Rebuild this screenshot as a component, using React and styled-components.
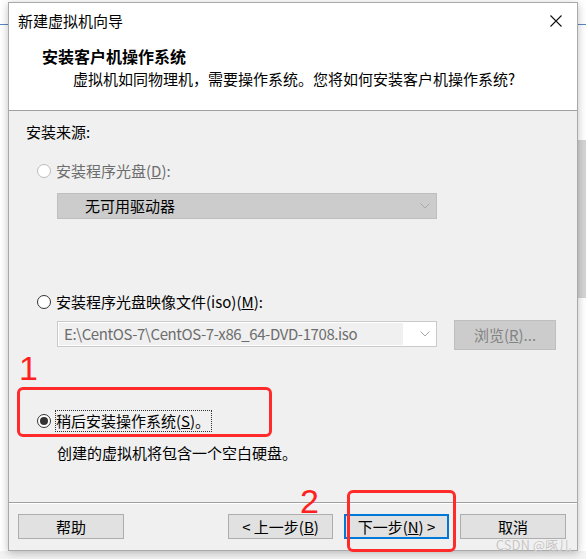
import React from 'react';
import styled, { createGlobalStyle } from 'styled-components';

const uiFont = `"Noto Sans CJK SC", "Noto Sans", sans-serif`;

const GlobalStyle = createGlobalStyle`
  html, body {
    margin: 0;
    padding: 0;
    background: #fff;
  }
`;

const Desktop = styled.div`
  width: 586px;
  height: 559px;
  box-sizing: border-box;
  padding: 2px 8px 0 8px;
  overflow: hidden;
  background:
    linear-gradient(#5a86c2, #5a86c2) 0 24px / 8px 1px no-repeat,
    linear-gradient(#5a86c2, #5a86c2) 578px 24px / 8px 1px no-repeat,
    linear-gradient(#d4d4d4, #d4d4d4) 578px 140px / 8px 158px no-repeat,
    linear-gradient(#f3f3f3, #f3f3f3) 0 551px / 586px 8px no-repeat,
    #fff;
`;

const Dialog = styled.div`
  position: relative;
  width: 570px;
  height: 549px;
  box-sizing: border-box;
  border: 1px solid #a9a9a9;
  box-shadow: 0 2px 8px rgba(0, 0, 0, 0.25);
  display: flex;
  flex-direction: column;
  font-family: ${uiFont};
  font-size: 15px;
  line-height: 20px;
  color: #000;
`;

const TitleBar = styled.div`
  height: 35px;
  flex: none;
  background: #fff;
  display: flex;
  align-items: center;
  justify-content: space-between;
  padding: 0 15px 0 9px;
`;

const Header = styled.div`
  height: 73px;
  flex: none;
  box-sizing: border-box;
  background: #fff;
  border-bottom: 1px solid #a0a0a0;
  padding: 8px 0 0 33px;
`;

const HeaderTitle = styled.div`
  font-weight: 700;
  font-size: 16px;
`;

const HeaderText = styled.div`
  margin: 3px 0 0 31px;
`;

const Body = styled.div`
  flex: 1;
  background: #f0f0f0;
  padding: 11px 0 0 17px;
  display: flex;
  flex-direction: column;
  align-items: flex-start;
`;

const RadioRow = styled.label`
  display: flex;
  align-items: center;
  gap: 5px;
  margin: ${(p) => p.$top}px 0 0 11px;
  color: ${(p) => (p.$disabled ? '#6d6d6d' : '#000')};
`;

const RadioDot = styled.span`
  width: 14px;
  height: 14px;
  box-sizing: border-box;
  border-radius: 50%;
  border: 1px solid ${(p) => (p.$disabled ? '#bcbcbc' : '#333')};
  background: #fff;
  display: flex;
  align-items: center;
  justify-content: center;
  &::after {
    content: '';
    display: ${(p) => (p.$checked ? 'block' : 'none')};
    width: 8px;
    height: 8px;
    border-radius: 50%;
    background: #333;
  }
`;

const FocusText = styled.span`
  outline: 1px dotted #333;
  outline-offset: 0;
  padding-right: 1px;
`;

const Combo = styled.div`
  margin: ${(p) => p.$top}px 0 0 31px;
  width: 380px;
  height: 26px;
  box-sizing: border-box;
  border: 1px solid ${(p) => (p.$filled ? '#bfbfbf' : '#cacaca')};
  background: ${(p) => (p.$filled ? '#cccccc' : '#fff')};
  display: flex;
  align-items: center;
  padding: 1px 6px 1px 1px;
`;

const ComboText = styled.div`
  flex: 1;
  align-self: stretch;
  display: flex;
  align-items: center;
  padding-left: ${(p) => p.$indent}px;
  background: ${(p) => (p.$field ? '#f0f0f0' : 'transparent')};
  margin-right: ${(p) => (p.$field ? 17 : 0)}px;
  color: ${(p) => (p.$field ? '#6d6d6d' : '#000')};
  letter-spacing: ${(p) => (p.$field ? '-0.4px' : '0')};
  white-space: nowrap;
`;

const InputRow = styled.div`
  display: flex;
  align-items: flex-start;
  margin-top: 9px;
`;

const BrowseButton = styled.div`
  margin: -1px 0 0 17px;
  width: 102px;
  height: 30px;
  box-sizing: border-box;
  border: 1px solid #bfbfbf;
  background: #cccccc;
  color: #838383;
  display: flex;
  align-items: center;
  justify-content: center;
`;

const Note = styled.div`
  margin: 12px 0 0 31px;
`;

const Footer = styled.div`
  flex: none;
  height: 48px;
  box-sizing: border-box;
  background: #f0f0f0;
  border-top: 1px solid #a0a0a0;
  box-shadow: inset 0 1px 0 #fff;
  padding: 11px 11px 0 9px;
  display: flex;
  align-items: flex-start;
  gap: 11px;
`;

const Button = styled.div`
  width: ${(p) => p.$w}px;
  height: 25px;
  box-sizing: border-box;
  border: ${(p) => (p.$default ? '2px solid #0078d7' : '1px solid #adadad')};
  background: #e1e1e1;
  display: flex;
  align-items: center;
  justify-content: center;
  white-space: nowrap;
  margin-left: ${(p) => (p.$push ? 'auto' : '0')};
`;

const Mark = styled.div`
  position: absolute;
  left: ${(p) => p.$x}px;
  top: ${(p) => p.$y}px;
  font-family: "Liberation Sans", Arial, sans-serif;
  font-size: 34px;
  line-height: 26px;
  color: #ff2020;
`;

const MarkBox = styled.div`
  position: absolute;
  left: ${(p) => p.$x}px;
  top: ${(p) => p.$y}px;
  width: ${(p) => p.$w}px;
  height: ${(p) => p.$h}px;
  box-sizing: border-box;
  border: 3px solid #ff2a2a;
  border-radius: 6px;
`;

const Watermark = styled.div`
  position: absolute;
  right: 6px;
  bottom: -1px;
  font-family: "Noto Sans CJK SC", sans-serif;
  font-size: 13px;
  line-height: 13px;
  color: #c4c4c4;
  text-shadow: 0 0 1px #fff;
`;

const Chevron = () => (
  <svg width="10" height="6" viewBox="0 0 10 6">
    <polyline points="0.5,0.5 5,5 9.5,0.5" fill="none" stroke="#a8a8a8" strokeWidth="1" />
  </svg>
);

const CloseIcon = () => (
  <svg width="12" height="12" viewBox="0 0 12 12">
    <path d="M0.5 0.5 L11.5 11.5 M11.5 0.5 L0.5 11.5" stroke="#111" strokeWidth="1.1" />
  </svg>
);

const App = () => (
  <>
    <GlobalStyle />
    <Desktop>
      <Dialog>
        <TitleBar>
          <span>新建虚拟机向导</span>
          <CloseIcon />
        </TitleBar>
        <Header>
          <HeaderTitle>安装客户机操作系统</HeaderTitle>
          <HeaderText>虚拟机如同物理机，需要操作系统。您将如何安装客户机操作系统?</HeaderText>
        </Header>
        <Body>
          <div>安装来源:</div>
          <RadioRow $top={19} $disabled>
            <RadioDot $disabled />
            <span>安装程序光盘(<u>D</u>):</span>
          </RadioRow>
          <Combo $top={12} $filled>
            <ComboText $indent={26}>无可用驱动器</ComboText>
            <Chevron />
          </Combo>
          <RadioRow $top={73}>
            <RadioDot />
            <span>安装程序光盘映像文件(iso)(<u>M</u>):</span>
          </RadioRow>
          <InputRow>
            <Combo $top={0}>
              <ComboText $field $indent={5}>E:\CentOS-7\CentOS-7-x86_64-DVD-1708.iso</ComboText>
              <Chevron />
            </Combo>
            <BrowseButton>浏览(<u>R</u>)...</BrowseButton>
          </InputRow>
          <RadioRow $top={61}>
            <RadioDot $checked />
            <FocusText>稍后安装操作系统(<u>S</u>)。</FocusText>
          </RadioRow>
          <Note>创建的虚拟机将包含一个空白硬盘。</Note>
        </Body>
        <Footer>
          <Button $w={106}>帮助</Button>
          <Button $w={105} $push>&lt; 上一步(<u>B</u>)</Button>
          <Button $w={105} $default>下一步(<u>N</u>) &gt;</Button>
          <Button $w={106}>取消</Button>
        </Footer>
        <Mark $x={10} $y={352}>1</Mark>
        <MarkBox $x={8} $y={384} $w={255} $h={50} />
        <Mark $x={291} $y={485}>2</Mark>
        <MarkBox $x={338} $y={487} $w={109} $h={62} />
        <Watermark>CSDN @啄儿</Watermark>
      </Dialog>
    </Desktop>
  </>
);

export default App;
